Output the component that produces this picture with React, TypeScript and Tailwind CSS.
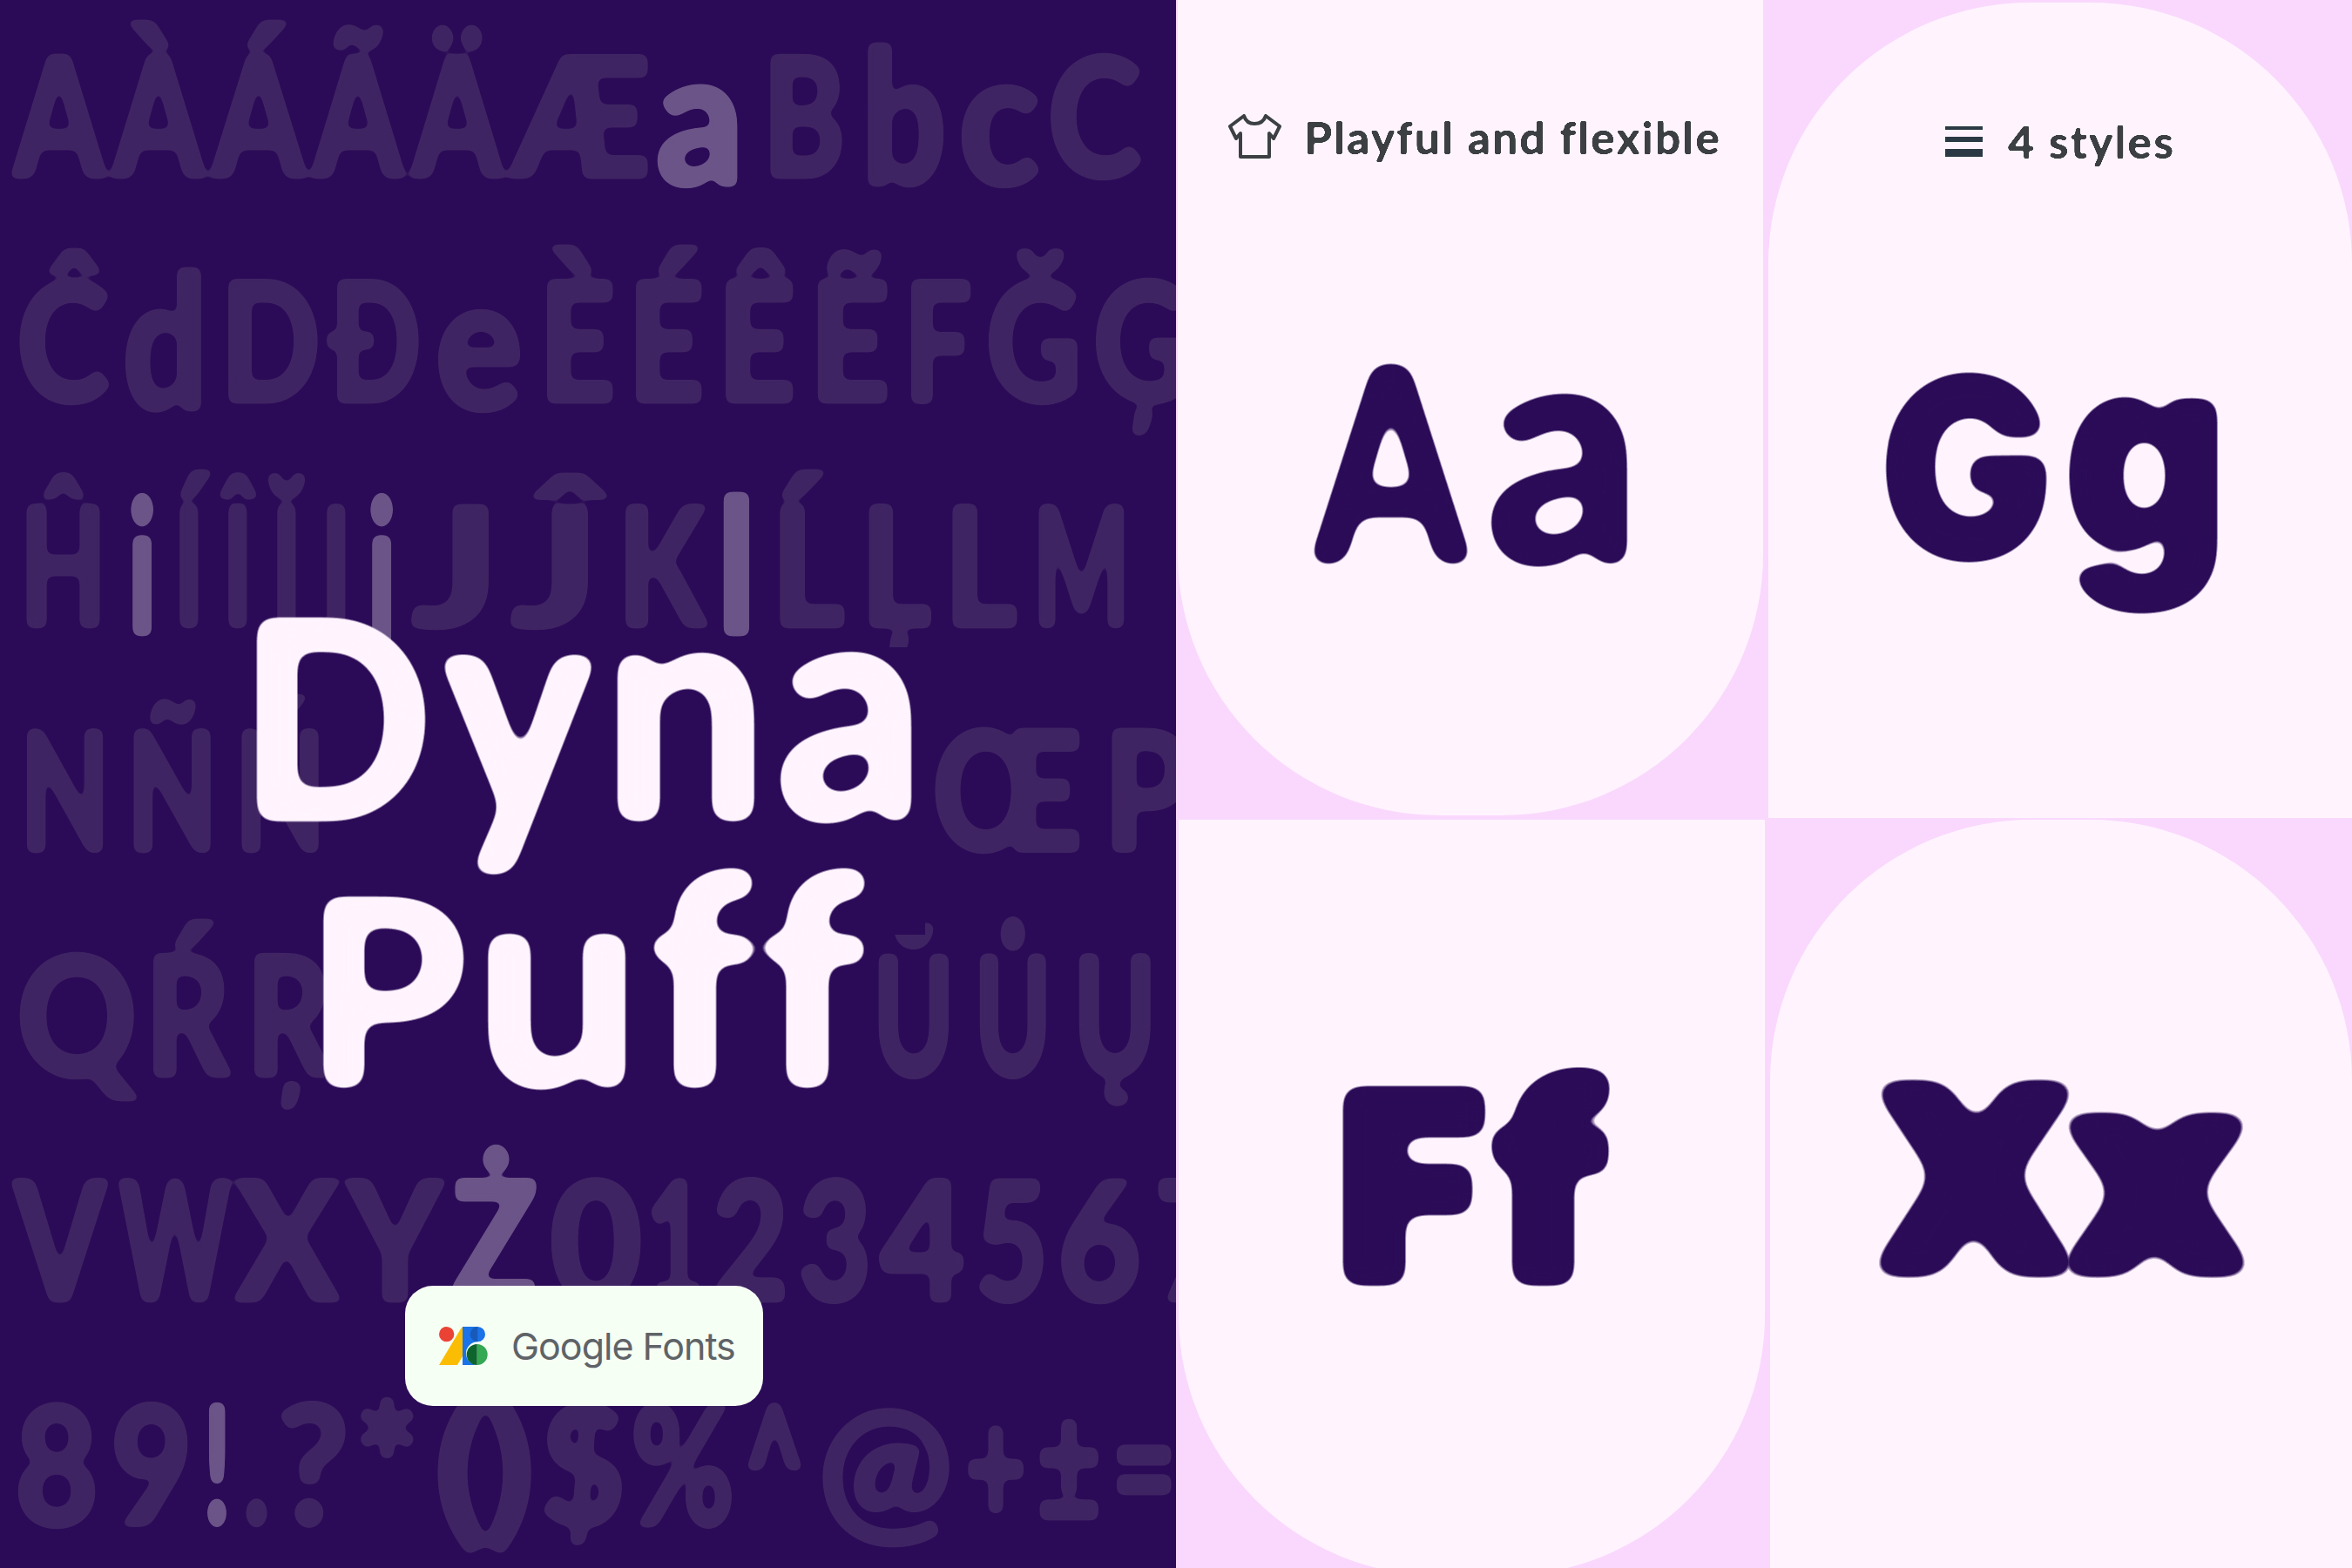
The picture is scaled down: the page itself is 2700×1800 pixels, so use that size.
import { useLayoutEffect, useRef } from 'react';

// [glyph, left, right, highlighted]
type Slot = [string, number, number, boolean?];

const wallRows: Slot[][] = [
  [['A', 17, 119], ['À', 131, 233], ['Á', 245, 349], ['Ã', 360, 461], ['Ä', 474, 575], ['Æ', 588, 745], ['a', 754, 853, true], ['B', 877, 969], ['b', 990, 1085], ['c', 1101, 1193], ['C', 1204, 1309]],
  [['Ĉ', 21, 125], ['d', 142, 237], ['D', 254, 366], ['Đ', 379, 482], ['e', 501, 599], ['È', 620, 706], ['É', 722, 808], ['Ê', 825, 913], ['Ẽ', 930, 1021], ['F', 1038, 1115], ['Ğ', 1133, 1240], ['Ģ', 1256, 1365]],
  [['Ĥ', 24, 121], ['i', 148, 178, true], ['Í', 202, 231], ['Î', 258, 287], ['Ĭ', 314, 343], ['I', 372, 400], ['j', 424, 452, true], ['J', 472, 575], ['Ĵ', 586, 689], ['K', 711, 810], ['l', 823, 868, true], ['Ĺ', 887, 969], ['Ļ', 989, 1068], ['L', 1085, 1167], ['M', 1187, 1296]],
  [['N', 24, 125], ['Ñ', 146, 248], ['Ń', 270, 372], ['O', 390, 500], ['Ò', 515, 625], ['Ó', 640, 750], ['Ô', 765, 875], ['Õ', 890, 1000], ['Œ', 1072, 1240], ['P', 1268, 1365]],
  [['Q', 21, 155], ['Ŕ', 168, 263], ['Ŗ', 284, 379], ['S', 400, 490], ['Ś', 505, 595], ['Š', 610, 700], ['T', 715, 805], ['Ť', 820, 900], ['U', 915, 990], ['Ŭ', 1003, 1094], ['Ů', 1120, 1206], ['Ų', 1233, 1326]],
  [['V', 17, 121], ['W', 138, 263], ['X', 271, 388], ['Y', 400, 508], ['Ż', 519, 616, true], ['0', 633, 736], ['1', 749, 801], ['2', 818, 904], ['3', 917, 999], ['4', 1012, 1107], ['5', 1120, 1202], ['6', 1216, 1309], ['7', 1326, 1420]],
  [['8', 19, 112], ['9', 129, 220], ['!', 234, 265, true], ['.', 280, 310], ['?', 319, 400], ['*', 407, 482], ['(', 504, 568], [')', 568, 629], ['$', 642, 736], ['%', 745, 861], ['^', 874, 943], ['@', 960, 1111], ['+', 1128, 1197], ['±', 1210, 1283], ['=', 1296, 1370]],
];

const isLower = (c: string) => c === c.toLowerCase() && c !== c.toUpperCase();

function Glyph({ glyph, width }: { glyph: string; width: number }) {
  const ref = useRef<HTMLSpanElement>(null);

  // squeeze each letter into the slot it has in the wall
  useLayoutEffect(() => {
    const el = ref.current;
    if (!el) return;
    const scale = Math.min(1.25, Math.max(0.62, width / (el.offsetWidth * 0.97)));
    el.style.transform = `scaleX(${scale})`;
  }, [width]);

  return (
    <span ref={ref} className="shrink-0">
      {glyph}
    </span>
  );
}

function WallRow({ slots }: { slots: Slot[] }) {
  return (
    <div className="flex h-[258px] items-start">
      {slots.map(([glyph, left, right, hi], i) => (
        <span
          key={i}
          className={`flex justify-center leading-[258px] font-black [-webkit-text-stroke:4px_currentColor] ${hi ? 'text-[#6b5488]' : 'text-[#3f2463]'} ${isLower(glyph) ? 'text-[216px]' : 'text-[190px]'}`}
          style={{ width: right - left, marginLeft: left - (i ? slots[i - 1][2] : 0) }}
        >
          <Glyph glyph={glyph} width={right - left} />
        </span>
      ))}
    </div>
  );
}

function GoogleLogo() {
  return (
    <svg viewBox="0 0 168 132" className="h-[44px] w-[56px]">
      <circle cx="26" cy="26" r="26" fill="#EA4335" />
      <path d="M0 132 78 2h3v100l-18 30z" fill="#FBBC04" />
      <path d="M81 0h52a26 26 0 0 1 0 52 36 36 0 0 0 0 80H81z" fill="#1A73E8" />
      <path d="M133 0a26 26 0 0 0 0 52z" fill="#185ABC" />
      <path d="M131 60a36 36 0 0 1 0 72z" fill="#34A853" />
      <path d="M131 60a36 36 0 0 0 0 72z" fill="#0D652D" />
    </svg>
  );
}

function ShirtIcon() {
  return (
    <svg viewBox="0 0 61 51" className="h-[51px] w-[61px] shrink-0" fill="none" stroke="#3c4043" strokeWidth="4" strokeLinejoin="round">
      <path d="M18 2c2 6 6 9 12 9s11-3 13-9l16 12-7 14-5-6v27H14V22l-5 6-7-14z" />
    </svg>
  );
}

export default function App() {
  return (
    <div className="flex h-[1800px] w-[2700px] overflow-hidden font-['Lato',sans-serif]">
      {/* filters that round the letters off */}
      <svg className="h-0 w-0">
        <defs>
          <filter id="puff-s" colorInterpolationFilters="sRGB">
            <feGaussianBlur stdDeviation="1" />
            <feColorMatrix values="1 0 0 0 0 0 1 0 0 0 0 0 1 0 0 0 0 0 8 -3" />
          </filter>
          <filter id="puff-m" x="-2%" y="-2%" width="104%" height="104%" colorInterpolationFilters="sRGB">
            <feGaussianBlur stdDeviation="5" />
            <feColorMatrix values="1 0 0 0 0 0 1 0 0 0 0 0 1 0 0 0 0 0 14 -6" />
          </filter>
          <filter id="puff-l" x="-30%" y="-30%" width="160%" height="160%" colorInterpolationFilters="sRGB">
            <feGaussianBlur stdDeviation="11" />
            <feColorMatrix values="1 0 0 0 0 0 1 0 0 0 0 0 1 0 0 0 0 0 14 -6" />
          </filter>
          <filter id="puff-xl" x="-30%" y="-30%" width="160%" height="160%" colorInterpolationFilters="sRGB">
            <feGaussianBlur stdDeviation="15" />
            <feColorMatrix values="1 0 0 0 0 0 1 0 0 0 0 0 1 0 0 0 0 0 14 -6" />
          </filter>
        </defs>
      </svg>

      <div className="relative h-[1800px] w-[1350px] shrink-0 overflow-hidden bg-[#2b0b57]">
        <div className="flex flex-col [filter:url(#puff-m)]">
          {wallRows.map((slots, i) => (
            <WallRow key={i} slots={slots} />
          ))}
        </div>

        <div className="absolute top-[743px] left-[372px] flex flex-col">
          <div className="h-[330px] w-[690px] bg-[#2b0b57]" />
          <div className="h-[230px] w-[628px] bg-[#2b0b57]" />
        </div>

        <div className="absolute top-[650px] left-0 flex w-full flex-col items-center text-[#fff4fe] [filter:url(#puff-l)]">
          <div className="mr-[8px] flex h-[300px] scale-x-[0.92] items-baseline leading-[300px] font-black tracking-[7px]">
            <span className="text-[320px]">D</span>
            <span className="text-[368px]">yna</span>
          </div>
          <div className="mt-[16px] flex h-[300px] items-baseline leading-[300px] font-black tracking-[6px]">
            <span className="text-[300px]">P</span>
            <span className="text-[340px]">uff</span>
          </div>
        </div>

        <div className="absolute top-[1476px] left-[465px] flex h-[138px] w-[411px] items-center gap-[27px] rounded-[32px] bg-[#f6fff4] pl-[39px]">
          <GoogleLogo />
          <span className="font-['Inter',sans-serif] text-[43px] tracking-[-1px] text-[#5f6368]">Google Fonts</span>
        </div>
      </div>

      <div className="grid h-[1800px] w-[1350px] shrink-0 grid-cols-[680px_670px] grid-rows-[939px_861px] bg-[#fad8fd]">
        <div>
          <div className="ml-[2px] flex h-[936px] w-[672px] flex-col items-center rounded-b-[300px] bg-[#fff4fe] pt-[131px]">
            <div className="flex h-[51px] items-center gap-[26px] pl-[10px]">
              <ShirtIcon />
              <span className="text-[52px] font-bold tracking-[2px] text-[#3c4043] [filter:url(#puff-s)]">Playful and flexible</span>
            </div>
            <div className="mt-[172px] flex h-[300px] items-baseline leading-[300px] font-black text-[#2b0b57] [filter:url(#puff-l)]">
              <span className="scale-x-[0.82] text-[315px]">A</span>
              <span className="ml-[-7px] scale-x-[0.95] text-[370px]">a</span>
            </div>
          </div>
        </div>

        <div>
          <div className="mt-[3px] flex h-[936px] w-[670px] flex-col items-center rounded-t-[300px] bg-[#fff4fe] pt-[139px]">
            <div className="flex h-[40px] items-center gap-[29px]">
              <div className="flex h-[35px] w-[43px] flex-col justify-between">
                <div className="h-[4px] bg-[#2b3944]" />
                <div className="h-[6px] bg-[#2b3944]" />
                <div className="h-[9px] bg-[#2b3944]" />
              </div>
              <span className="text-[52px] font-bold tracking-[2px] text-[#3c4043] [filter:url(#puff-s)]">4 styles</span>
            </div>
            <div className="mt-[185px] flex h-[300px] items-baseline pr-[14px] font-['Inter',sans-serif] leading-[300px] font-black text-[#2b0b57] [filter:url(#puff-l)]">
              <span className="translate-y-[8px] scale-x-[0.92] text-[290px]">G</span>
              <span className="ml-[-8px] scale-x-[0.92] text-[322px]">g</span>
            </div>
          </div>
        </div>

        <div className="overflow-hidden">
          <div className="mt-[2px] ml-[3px] flex h-[868px] w-[673px] flex-col items-center rounded-b-[300px] bg-[#fff4fe] pt-[254px]">
            <div className="flex h-[300px] items-baseline gap-[26px] pr-[10px] leading-[300px] font-black text-[#2b0b57] [-webkit-text-stroke:24px_#2b0b57]">
              <span className="scale-x-[1.05] text-[280px] [filter:url(#puff-l)]">F</span>
              <span className="scale-x-[1.05] text-[305px] [filter:url(#puff-l)]">f</span>
            </div>
          </div>
        </div>

        <div className="overflow-hidden">
          <div className="mt-[2px] ml-[2px] flex h-[880px] w-[668px] flex-col items-center rounded-t-[300px] bg-[#fff4fe] pt-[243px]">
            <div className="flex h-[300px] items-baseline gap-[40px] leading-[300px] font-black text-[#2b0b57] [-webkit-text-stroke:34px_#2b0b57]">
              <span className="scale-x-[1.02] text-[262px] [filter:url(#puff-xl)]">X</span>
              <span className="scale-x-[1.05] text-[296px] [filter:url(#puff-xl)]">x</span>
            </div>
          </div>
        </div>
      </div>
    </div>
  );
}
